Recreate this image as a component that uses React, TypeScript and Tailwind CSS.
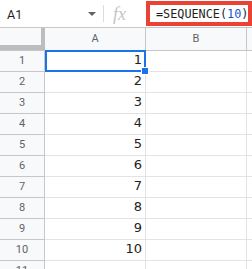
import React from "react";

const rows = [1, 2, 3, 4, 5, 6, 7, 8, 9, 10, 11];

export default function App() {
  return (
    <div className="w-[252px] h-[269px] overflow-hidden bg-white relative" style={{ fontFamily: "Roboto, Arial, sans-serif" }}>
      {/* Formula bar */}
      <div className="flex h-[28px] border-b border-[#c7c7c7] bg-white">
        <div className="flex w-[103px] items-center pl-[7px] pr-[7px] pt-[3px]">
          <span className="text-[12.5px] text-[#1f1f1f]">A1</span>
          <div className="flex-1" />
          <svg width="8" height="4" viewBox="0 0 8 4" className="mt-[-2px]">
            <path d="M0 0 L8 0 L4 4 Z" fill="#5f6368" />
          </svg>
        </div>
        <div className="mt-[5px] h-[17px] w-px bg-[#dadce0]" />
        <div className="flex w-[40px] items-center pl-[9px] pt-[1px]">
          <span className="text-[18px] italic text-[#c4c4c4]" style={{ fontFamily: '"Liberation Serif", "DejaVu Serif", serif' }}>fx</span>
        </div>
        <div className="mt-[1px] ml-[2px] flex h-[25px] w-[106px] items-center border-[4px] border-[#ea4335] pl-[6px] pt-[2px]">
          <span className="text-[11.8px] text-[#1f1f1f] whitespace-nowrap" style={{ fontFamily: '"DejaVu Sans Mono", "Liberation Mono", monospace' }}>
            =SEQUENCE(<span className="text-[#1155cc]">10</span>)
          </span>
        </div>
      </div>

      {/* Column header */}
      <div className="flex h-[23px] border-b border-[#c7c7c7] bg-[#f8f9fa]">
        <div className="h-[22px] w-[45px] border-r-[4px] border-b-[5px] border-[#bdbdbd] bg-[#f8f9fa]" />
        <div className="flex w-[101px] items-center justify-center border-r border-[#c7c7c7] text-[11px] text-[#5f6368]">A</div>
        <div className="flex w-[101px] items-center justify-center border-r border-[#c7c7c7] text-[11px] text-[#5f6368]">B</div>
        <div className="flex-1" />
      </div>

      {/* Rows */}
      {rows.map((r) => (
        <div key={r} className={"flex h-[21px] " + (r === 1 ? "relative z-10" : "")}>
          <div className="flex w-[45px] items-center justify-center border-r border-b border-[#c7c7c7] bg-[#f8f9fa] text-[11px] text-[#5f6368]">
            {r}
          </div>
          <div
            className="relative flex w-[101px] items-end justify-end border-r border-b border-[#e2e3e3] pr-[3px] pb-[2px] text-[13px] text-[#222]"
            style={{ fontFamily: '"DejaVu Sans", Verdana, sans-serif' }}
          >
            {r <= 10 ? r : ""}
            {r === 1 && (
              <>
                <div className="absolute left-0 top-[-1px] right-[-1px] bottom-[-1px] border-2 border-[#1a73e8]" />
                <div className="absolute right-[-4px] bottom-[-4px] h-[6px] w-[6px] border border-white bg-[#1a73e8] box-content" />
              </>
            )}
          </div>
          <div className="w-[101px] border-r border-b border-[#e2e3e3]" />
          <div className="flex-1 border-b border-[#e2e3e3]" />
        </div>
      ))}
    </div>
  );
}
